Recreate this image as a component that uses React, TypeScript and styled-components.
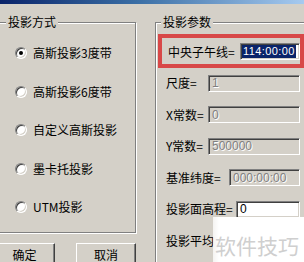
import * as React from 'react';
import styled, { createGlobalStyle } from 'styled-components';

const face = '#d4d0c8';

const GlobalStyle = createGlobalStyle`
  body {
    margin: 0;
    background: ${face};
  }
`;

const Window = styled.div`
  background: ${face};
  color: #000;
  display: flex;
  flex-direction: column;
  font-family: 'Noto Sans CJK SC', 'Liberation Sans', sans-serif;
  font-size: 12px;
  height: 262px;
  overflow: hidden;
  position: relative;
  width: 304px;
`;

const TitleStrip = styled.div`
  background: linear-gradient(90deg, #0a246a 0%, #3a6ea5 45%, #a6caf0 100%);
  flex: none;
  height: 4px;
`;

const Content = styled.div`
  align-items: flex-start;
  display: flex;
  gap: 19px;
  margin-left: -2px;
  padding-top: 18px;
`;

const Column = styled.div`
  display: flex;
  flex: none;
  flex-direction: column;
`;

const GroupBox = styled.div<{ $width: number; $height: number }>`
  border: 1px solid #808080;
  box-shadow: inset 1px 1px 0 #fff, 1px 1px 0 #fff;
  box-sizing: border-box;
  display: flex;
  flex-direction: column;
  height: ${({ $height }) => $height}px;
  width: ${({ $width }) => $width}px;
`;

const Legend = styled.div<{ $indent: number }>`
  align-self: flex-start;
  background: ${face};
  line-height: 14px;
  margin-left: ${({ $indent }) => $indent}px;
  margin-top: -8px;
  padding: 0 2px;
`;

const RadioList = styled.div`
  display: flex;
  flex-direction: column;
  gap: 24.5px;
  padding: 17px 0 0 16px;
`;

const RadioRow = styled.label`
  align-items: center;
  display: flex;
  gap: 6px;
  height: 14px;
  line-height: 14px;
`;

const RadioDot = styled.span<{ $checked?: boolean }>`
  background: #fff;
  border: 1px solid;
  border-color: #808080 #fff #fff #808080;
  border-radius: 50%;
  box-shadow: inset 1px 1px 0 #404040, inset -1px -1px 0 ${face};
  box-sizing: border-box;
  flex: none;
  height: 12px;
  position: relative;
  width: 12px;

  &::after {
    background: #000;
    border-radius: 50%;
    content: '';
    display: ${({ $checked }) => ($checked ? 'block' : 'none')};
    height: 4px;
    left: 3px;
    position: absolute;
    top: 3px;
    width: 4px;
  }
`;

const ButtonRow = styled.div`
  display: flex;
  gap: 21px;
  margin: 10px 0 0 -4px;
`;

const Button = styled.button<{ $width: number }>`
  background: ${face};
  border: 1px solid;
  border-color: #fff #404040 #404040 #fff;
  box-shadow: inset -1px -1px 0 #808080;
  color: #000;
  font: inherit;
  height: 23px;
  padding: 0;
  width: ${({ $width }) => $width}px;
`;

const Highlight = styled.div`
  align-items: center;
  border: 4px solid #d84848;
  box-sizing: border-box;
  display: flex;
  height: 34px;
  justify-content: space-between;
  margin: 5px 0 0 2px;
  padding: 0 0 0 6px;
  width: 146px;
`;

const FieldList = styled.div`
  display: flex;
  flex-direction: column;
  gap: 14.5px;
  margin-top: 6.5px;
  padding-left: 10px;
`;

const FieldRow = styled.div`
  align-items: center;
  display: flex;
  height: 17px;
  justify-content: space-between;
  line-height: 14px;
  width: 134px;
`;

const TextBox = styled.div<{ $width: number; $disabled?: boolean; $pad?: number }>`
  align-items: center;
  background: ${({ $disabled }) => ($disabled ? face : '#fff')};
  border: 1px solid;
  border-color: #808080 #fff #fff #808080;
  box-shadow: inset 1px 1px 0 #404040, inset -1px -1px 0 ${face};
  box-sizing: border-box;
  color: ${({ $disabled }) => ($disabled ? '#808080' : '#000')};
  display: flex;
  flex: none;
  font-family: 'Liberation Sans', sans-serif;
  font-size: 12px;
  height: 17px;
  overflow: hidden;
  padding-left: ${({ $pad = 3 }) => $pad}px;
  text-shadow: ${({ $disabled }) => ($disabled ? '1px 1px 0 #fff' : 'none')};
  white-space: nowrap;
  width: ${({ $width }) => $width}px;
`;

const Selected = styled.span`
  background: #0a246a;
  color: #fff;
  font-size: 11px;
  letter-spacing: 0.4px;
  line-height: 13px;
  padding: 0 1px;
`;

const Watermark = styled.div`
  background: linear-gradient(90deg, rgba(255, 255, 255, 0.75) 0, #fff 6px);
  bottom: 0;
  box-sizing: border-box;
  color: #cfcfcf;
  font-family: 'Noto Sans CJK SC', sans-serif;
  font-size: 21px;
  height: 45px;
  line-height: 21px;
  padding: 18px 0 0 2px;
  position: absolute;
  right: 0;
  white-space: nowrap;
  width: 91px;
`;

const modes = ['高斯投影3度带', '高斯投影6度带', '自定义高斯投影', '墨卡托投影', 'UTM投影'];

const fields = [
  { label: '尺度=', value: '1', width: 92 },
  { label: 'X常数=', value: '0', width: 92 },
  { label: 'Y常数=', value: '500000', width: 92 },
  { label: '基准纬度=', value: '000:00:00', width: 71 },
  { label: '投影面高程=', value: '0', width: 64, editable: true },
];

export default function App() {
  return (
    <Window>
      <GlobalStyle />
      <TitleStrip />
      <Content>
        <Column>
          <GroupBox $width={138} $height={211}>
            <Legend $indent={7}>投影方式</Legend>
            <RadioList>
              {modes.map((mode, i) => (
                <RadioRow key={mode}>
                  <RadioDot $checked={i === 0} />
                  {mode}
                </RadioRow>
              ))}
            </RadioList>
          </GroupBox>
          <ButtonRow>
            <Button $width={61}>确定</Button>
            <Button $width={60}>取消</Button>
          </ButtonRow>
        </Column>
        <Column>
          <GroupBox $width={170} $height={260}>
            <Legend $indent={5}>投影参数</Legend>
            <Highlight>
              中央子午线=
              <TextBox $width={60} $pad={1}>
                <Selected>114:00:00</Selected>
              </TextBox>
            </Highlight>
            <FieldList>
              {fields.map((f) => (
                <FieldRow key={f.label}>
                  {f.label}
                  <TextBox $width={f.width} $disabled={!f.editable}>
                    {f.value}
                  </TextBox>
                </FieldRow>
              ))}
              <FieldRow>投影平均</FieldRow>
            </FieldList>
          </GroupBox>
        </Column>
      </Content>
      <Watermark>软件技巧</Watermark>
    </Window>
  );
}
